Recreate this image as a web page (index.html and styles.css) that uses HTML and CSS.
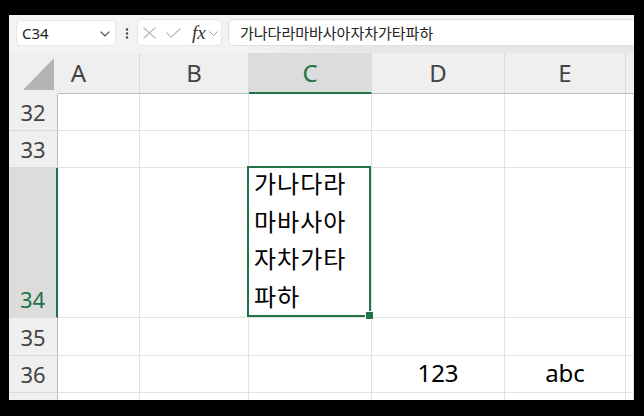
FILE: index.html
```html
<!DOCTYPE html>
<html lang="ko">
<head>
<meta charset="utf-8">
<title>Excel</title>
<link rel="stylesheet" href="styles.css">
</head>
<body>
<div class="frame">
  <div class="app">
    <div class="toolbar">
      <div class="namebox">
        <span class="nb-text">C34</span>
        <svg class="nb-chev" width="10" height="6" viewBox="0 0 10 6"><path d="M0.6 0.6 L5 5 L9.4 0.6" fill="none" stroke="#444" stroke-width="1.1"/></svg>
      </div>
      <svg class="dots" width="4" height="12" viewBox="0 0 4 12"><circle cx="2" cy="1.5" r="1.2" fill="#444"/><circle cx="2" cy="5.5" r="1.2" fill="#444"/><circle cx="2" cy="9.5" r="1.2" fill="#444"/></svg>
      <div class="fxbox">
        <svg class="ic-x" width="13" height="12" viewBox="0 0 13 12"><path d="M0.5 0.5 L12.5 11.5 M12.5 0.5 L0.5 11.5" fill="none" stroke="#b9b9b9" stroke-width="1.1"/></svg>
        <svg class="ic-ok" width="15" height="10" viewBox="0 0 15 10"><path d="M0.5 4.6 L5 9.2 L14.5 0.5" fill="none" stroke="#b9b9b9" stroke-width="1.1"/></svg>
        <span class="fx">fx</span>
        <svg class="ic-chev" width="9" height="5" viewBox="0 0 9 5"><path d="M0.5 0.5 L4.5 4.4 L8.5 0.5" fill="none" stroke="#9a9a9a" stroke-width="1"/></svg>
      </div>
      <div class="formula">가나다라마바사아자차가타파하</div>
    </div>
    <div class="grid">
      <div class="corner"><svg width="32" height="33" viewBox="0 0 32 33"><path d="M31 0 L31 32 L0 32 Z" fill="#b4b4b4"/></svg></div>
      <div class="ch ch-a">A</div>
      <div class="ch">B</div>
      <div class="ch ch-sel">C</div>
      <div class="ch">D</div>
      <div class="ch">E</div>
      <div class="ch ch-last"></div>

      <div class="rh">32</div>
      <div class="c"></div><div class="c"></div><div class="c"></div><div class="c"></div><div class="c"></div><div class="c"></div>

      <div class="rh">33</div>
      <div class="c"></div><div class="c"></div><div class="c"></div><div class="c"></div><div class="c"></div><div class="c"></div>

      <div class="rh rh-sel">34</div>
      <div class="c"></div><div class="c"></div>
      <div class="c sel"><div class="wrap">가나다라마바사아자차가타파하</div></div>
      <div class="c"></div><div class="c"></div><div class="c"></div>

      <div class="rh">35</div>
      <div class="c"></div><div class="c"></div><div class="c"></div><div class="c"></div><div class="c"></div><div class="c"></div>

      <div class="rh">36</div>
      <div class="c"></div><div class="c"></div><div class="c"></div>
      <div class="c val">123</div>
      <div class="c val">abc</div>
      <div class="c"></div>

      <div class="rh"></div>
      <div class="c"></div><div class="c"></div><div class="c"></div><div class="c"></div><div class="c"></div><div class="c"></div>
    </div>
  </div>
</div>
</body>
</html>
```

FILE: styles.css
```css
* { box-sizing: border-box; }

html, body {
  margin: 0;
  padding: 0;
  background: #000;
}

.frame {
  width: 644px;
  height: 416px;
  padding: 15px 10px 16px 9px;
  background: #000;
}

.app {
  width: 625px;
  height: 385px;
  overflow: hidden;
  background: #f3f3f3;
  display: flex;
  flex-direction: column;
  font-family: "Noto Sans", "Noto Sans CJK KR", sans-serif;
}

/* ---------- toolbar ---------- */
.toolbar {
  height: 38px;
  flex: none;
  display: flex;
  align-items: flex-start;
  padding-top: 4px;
  background:
    linear-gradient(to right, #f3f3f3 230px, #e7e7e7 330px) 0 31px / 100% 7px no-repeat,
    #f3f3f3;
}

.namebox {
  margin-left: 7px;
  margin-top: 1px;
  width: 100px;
  height: 26px;
  background: #fff;
  border: 1px solid #e6e6e6;
  border-radius: 5px;
  display: flex;
  align-items: center;
  padding-left: 5px;
  padding-right: 5px;
}

.nb-text {
  font-family: "Noto Sans", sans-serif;
  font-size: 15px;
  color: #222;
  flex: 1;
  line-height: 1;
}

.nb-chev { display: block; margin-top: 1px; }

.dots {
  display: block;
  margin-left: 9px;
  margin-top: 9px;
}

.fxbox {
  margin-left: 8px;
  width: 85px;
  height: 27px;
  background: #fff;
  border: 1px solid #e6e6e6;
  border-radius: 5px;
  display: flex;
  align-items: center;
  padding-left: 5px;
}

.ic-x { display: block; }
.ic-ok { display: block; margin-left: 10px; }

.fx {
  font-family: "Liberation Serif", serif;
  font-style: italic;
  font-size: 19px;
  line-height: 1;
  color: #333;
  margin-left: 11px;
  margin-top: -1px;
}

.ic-chev { display: block; margin-left: 3px; margin-top: 1px; }

.formula {
  margin-left: 6px;
  flex: 1;
  margin-right: -10px;
  height: 27px;
  background: #fff;
  border: 1px solid #dedede;
  border-radius: 5px;
  display: flex;
  align-items: center;
  padding-left: 11px;
  font-family: "Noto Sans CJK KR", sans-serif;
  font-size: 15px;
  color: #222;
  white-space: nowrap;
}

/* ---------- grid ---------- */
.grid {
  flex: 1;
  display: grid;
  grid-template-columns: 49px 82px 109px 123px 133px 121px 1fr;
  grid-template-rows: 41px 37px 37px 150px 38px 37px 1fr;
  background: #fff;
}

.corner {
  background: #efefef;
  display: flex;
  align-items: flex-start;
  justify-content: flex-start;
  padding: 5px 0 0 14px;
}
.corner svg { display: block; }

.ch {
  background: #efefef;
  border-right: 1px solid #dadada;
  border-bottom: 1px solid #bdbdbd;
  display: flex;
  align-items: center;
  justify-content: center;
  font-family: "Noto Sans", sans-serif;
  font-size: 24px;
  line-height: 1;
  color: #444;
  padding-bottom: 1px;
}

.ch-a { padding-right: 40px; }

.ch-sel {
  background: #dcdcdc;
  color: #217346;
  border-bottom: 2px solid #217346;
  padding-bottom: 0;
}

.ch-last { border-right: none; }

.rh {
  background: #efefef;
  border-right: 1px solid #bdbdbd;
  border-bottom: 1px solid #dadada;
  display: flex;
  align-items: flex-end;
  justify-content: center;
  font-family: "Noto Sans", sans-serif;
  font-size: 22px;
  line-height: 1;
  color: #444;
  padding-bottom: 7px;
}

.rh-sel {
  background: #dcdcdc;
  color: #217346;
  border-right: 2px solid #217346;
}

.c {
  border-right: 1px solid #e1e1e1;
  border-bottom: 1px solid #e1e1e1;
  background: #fff;
}

.sel {
  position: relative;
  z-index: 2;
  display: flex;
  flex-direction: column;
  justify-content: flex-end;
  padding: 0 8px 3px 5px;
}

.sel::after {
  content: "";
  position: absolute;
  left: -2px;
  top: -2px;
  right: 0;
  bottom: 0;
  border: 2px solid #217346;
  pointer-events: none;
}

.sel::before {
  content: "";
  position: absolute;
  right: -3px;
  bottom: -3px;
  width: 7px;
  height: 7px;
  background: #217346;
  border: 1px solid #fff;
  z-index: 3;
}

.wrap {
  font-family: "Noto Sans CJK KR", sans-serif;
  font-size: 24px;
  letter-spacing: 1px;
  line-height: 37.5px;
  color: #000;
  word-break: break-all;
}

.val {
  display: flex;
  align-items: flex-end;
  justify-content: center;
  font-family: "Noto Sans", sans-serif;
  font-size: 24px;
  line-height: 1;
  color: #000;
  padding-bottom: 7px;
}
```
